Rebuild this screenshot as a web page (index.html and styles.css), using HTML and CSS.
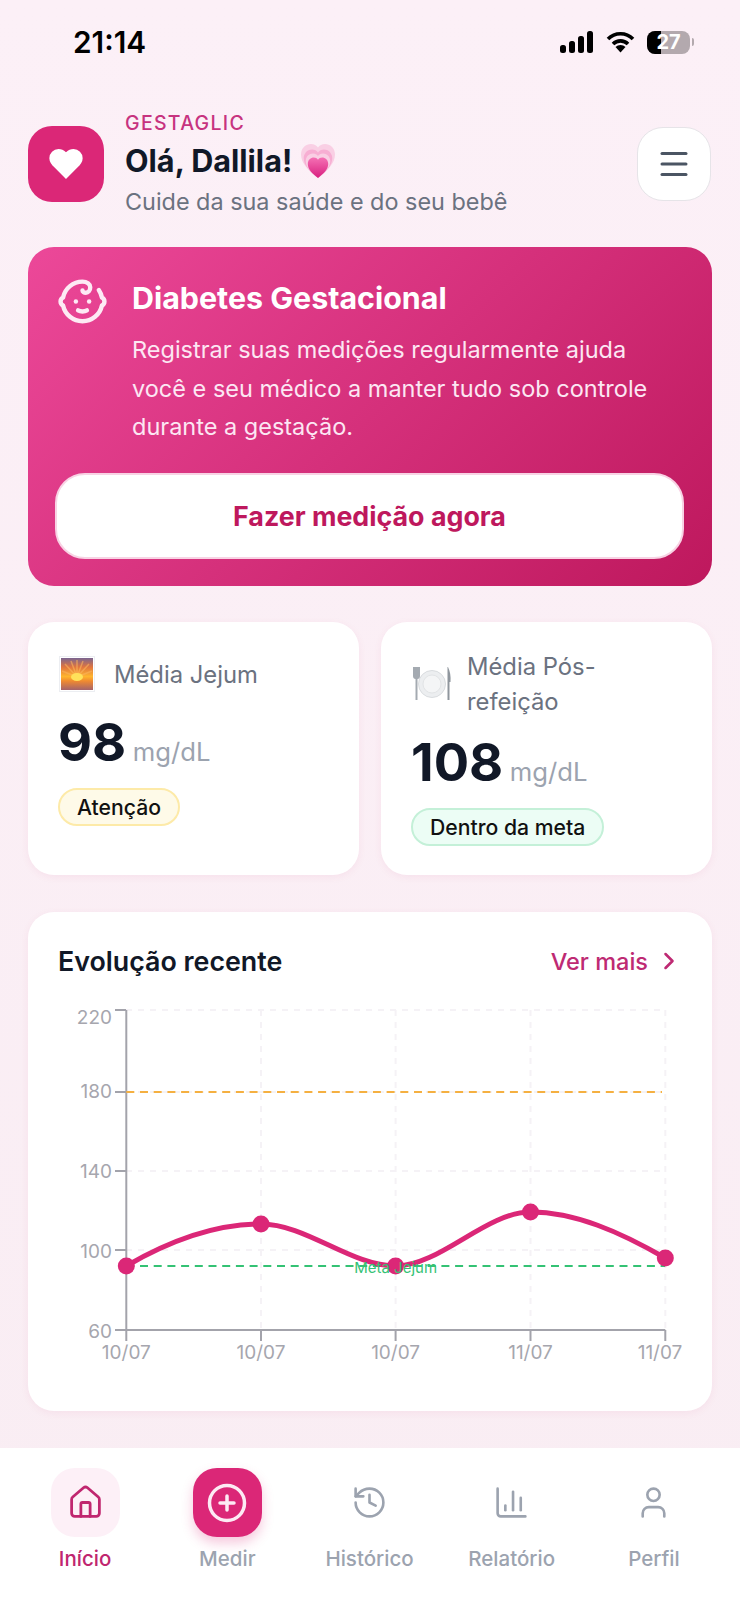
FILE: index.html
```html
<!DOCTYPE html>
<html>
<head>
    <meta charset="utf-8">
    <link rel="stylesheet" href="styles.css">
</head>
<body>
    <div id="screen">
        <div id="status_bar">
            <span id="status_time">21:14</span>
            <div id="status_icons">
                <svg width="34" height="22" viewBox="0 0 34 22"><rect x="0" y="14" width="6" height="8" rx="2.5"/><rect x="9" y="10" width="6" height="12" rx="2.5"/><rect x="18" y="5" width="6" height="17" rx="2.5"/><rect x="27" y="0" width="6" height="22" rx="2.5"/></svg>
                <svg width="29" height="22" viewBox="0 0 29 22" fill="none" stroke="#000" stroke-width="3.6"><path d="M2 8a17.5 17.5 0 0 1 25 0"/><path d="M7 13a10.5 10.5 0 0 1 15 0"/><path d="M14.5 21.5l-5-5.4a6.8 6.8 0 0 1 10 0z" fill="#000" stroke="none"/></svg>
                <div id="battery">
                    <div id="battery_level"></div>
                    <span>27</span>
                </div>
                <div id="battery_tip"></div>
            </div>
        </div>

        <div id="top_header">
            <div id="logo">
                <svg width="40" height="40" viewBox="0 0 24 24" fill="#fff"><path d="M19 14c1.49-1.46 3-3.21 3-5.5A5.5 5.5 0 0 0 16.5 3c-1.76 0-3 .5-4.5 2-1.5-1.5-2.74-2-4.5-2A5.5 5.5 0 0 0 2 8.5c0 2.3 1.5 4.05 3 5.5l7 7Z"/></svg>
            </div>
            <div id="greeting">
                <div id="brand">GESTAGLIC</div>
                <div id="hello">Olá, Dallila!
                    <svg width="36" height="36" viewBox="0 0 36 36">
                        <defs>
                            <path id="heart_shape" d="M18 35C8 27 1 20 1 11.500C1 5 6 1 11 1c3 0 5.500 1.200 7 3.500C19.500 2.200 22 1 25 1c5 0 10 4 10 10.500C35 20 28 27 18 35Z"/>
                            <linearGradient id="heart_core" x1="0" y1="0" x2="0" y2="1"><stop offset="0" stop-color="#f570b4"/><stop offset="1" stop-color="#d81f7f"/></linearGradient>
                        </defs>
                        <use href="#heart_shape" fill="#f9cfe4"/>
                        <use href="#heart_shape" fill="#f7aed3" transform="translate(18 35) scale(.84) translate(-18 -35)"/>
                        <use href="#heart_shape" fill="#f9cfe4" transform="translate(18 35) scale(.72) translate(-18 -35)"/>
                        <use href="#heart_shape" fill="url(#heart_core)" transform="translate(18 35) scale(.6) translate(-18 -35)"/>
                    </svg>
                </div>
                <div id="tagline">Cuide da sua saúde e do seu bebê</div>
            </div>
            <div id="menu_btn">
                <svg width="36" height="36" viewBox="0 0 24 24" fill="none" stroke="#4b5563" stroke-width="2" stroke-linecap="round" stroke-linejoin="round"><path d="M4 5h16"/><path d="M4 12h16"/><path d="M4 19h16"/></svg>
            </div>
        </div>

        <div id="hero">
            <div id="hero_top">
                <svg width="53" height="53" viewBox="0 0 24 24" fill="none" stroke="#fdeaf4" stroke-width="2" stroke-linecap="round" stroke-linejoin="round"><path d="M10 16c.5.3 1.200.5 2 .5s1.500-.2 2-.5"/><path d="M15 12h.01"/><path d="M19.380 6.813A9 9 0 0 1 20.800 10.200a2 2 0 0 1 0 3.600 9 9 0 0 1-17.600 0 2 2 0 0 1 0-3.600A9 9 0 0 1 12 3c2 0 3.500 1.100 3.500 2.500s-.9 2.500-2 2.500c-.8 0-1.500-.4-1.500-1"/><path d="M9 12h.01"/></svg>
                <div id="hero_text">
                    <div id="hero_title">Diabetes Gestacional</div>
                    <div id="hero_desc">Registrar suas medições regularmente ajuda você e seu médico a manter tudo sob controle durante a gestação.</div>
                </div>
            </div>
            <div id="hero_btn">Fazer medição agora</div>
        </div>

        <div id="stats">
            <div class="stat_card">
                <div class="stat_label">
                    <svg class="stat_icon" width="36" height="36" viewBox="0 0 36 36">
                        <defs><linearGradient id="sky" x1="0" y1="0" x2="0" y2="1"><stop offset="0" stop-color="#7a6590"/><stop offset="0.28" stop-color="#e0743f"/><stop offset="0.58" stop-color="#ffb52e"/><stop offset="0.72" stop-color="#f08a30"/><stop offset="1" stop-color="#a5636a"/></linearGradient></defs>
                        <rect x="0.5" y="0.5" width="35" height="35" fill="#fff" stroke="#eceef2"/>
                        <rect x="2" y="2" width="32" height="32" fill="url(#sky)"/>
                        <path d="M18 21L6 8M18 21L12 5M18 21L18 4M18 21L24 5M18 21L30 8M18 21L3 15M18 21L33 15" stroke="#fbb45c" stroke-width="1.500" opacity="0.6"/>
                        <ellipse cx="18" cy="21" rx="6" ry="4" fill="#ffe15a"/>
                    </svg>
                    <span>Média Jejum</span>
                </div>
                <div class="stat_value"><b>98</b> <span>mg/dL</span></div>
                <div class="badge badge_warn">Atenção</div>
            </div>
            <div class="stat_card">
                <div class="stat_label">
                    <svg class="stat_icon" width="40" height="38" viewBox="0 0 40 38">
                        <circle cx="20" cy="19" r="13.500" fill="#eceef0" stroke="#d9dcdf"/>
                        <circle cx="20" cy="19" r="9" fill="#f4f5f6" stroke="#e2e4e6"/>
                        <path d="M1 2v9c0 2 1 3 2.500 3v21h2V14C7 14 8 13 8 11V2" fill="#9aa1a8" opacity="0.9"/>
                        <path d="M36 2c2 4 3 9 2.500 15h-1v18h-2V2z" fill="#8f969d"/>
                    </svg>
                    <span>Média Pós-refeição</span>
                </div>
                <div class="stat_value"><b>108</b> <span>mg/dL</span></div>
                <div class="badge badge_ok">Dentro da meta</div>
            </div>
        </div>

        <div id="chart_card">
            <div id="chart_header">
                <div id="chart_title">Evolução recente</div>
                <div id="see_more">Ver mais
                    <svg width="28" height="28" viewBox="0 0 24 24" fill="none" stroke="#be2a73" stroke-width="2.200" stroke-linecap="round" stroke-linejoin="round"><path d="m9 18 6-6-6-6"/></svg>
                </div>
            </div>
            <svg id="chart" width="684" height="390" viewBox="28 990 684 390">
                <g class="grid">
                    <path d="M126 1010H665M126 1092H665M126 1171H665M126 1250H665"/>
                    <path d="M261 1010V1330M395.600 1010V1330M530.500 1010V1330M665.300 1010V1330"/>
                </g>
                <path class="axis" d="M126.300 1010V1330H665.300M115 1010h11M115 1092h11M115 1171h11M115 1250h11M115 1330h11M126.300 1330v11M261 1330v11M395.600 1330v11M530.500 1330v11M665.300 1330v11"/>
                <path class="limit_high" d="M126.300 1092H662"/>
                <path class="limit_goal" d="M126.300 1266H665"/>
                <path class="curve" d="M126.300 1266C171 1240 216 1224 261 1224C306 1224 351 1266 395.600 1266C440 1266 486 1212 530.500 1212C575 1212 620 1232 665.300 1258"/>
                <g class="points">
                    <circle cx="126.300" cy="1266" r="8.500"/>
                    <circle cx="261" cy="1224" r="8.500"/>
                    <circle cx="395.600" cy="1266" r="8.500"/>
                    <circle cx="530.500" cy="1212" r="8.500"/>
                    <circle cx="665.300" cy="1258" r="8.500"/>
                </g>
                <text class="goal_label" x="395.600" y="1273">Meta Jejum</text>
                <g class="y_labels">
                    <text x="112" y="1024">220</text>
                    <text x="112" y="1098">180</text>
                    <text x="112" y="1178">140</text>
                    <text x="112" y="1258">100</text>
                    <text x="112" y="1338">60</text>
                </g>
                <g class="x_labels">
                    <text x="126.300" y="1359">10/07</text>
                    <text x="261" y="1359">10/07</text>
                    <text x="395.600" y="1359">10/07</text>
                    <text x="530.500" y="1359">11/07</text>
                    <text x="660" y="1359">11/07</text>
                </g>
            </svg>
        </div>

        <div id="nav">
            <div class="nav_item nav_active">
                <div class="nav_icon">
                    <svg width="37" height="37" viewBox="0 0 24 24" fill="none" stroke="#c0266f" stroke-width="1.800" stroke-linecap="round" stroke-linejoin="round"><path d="M15 21v-8a1 1 0 0 0-1-1h-4a1 1 0 0 0-1 1v8"/><path d="M3 10a2 2 0 0 1 .709-1.528l7-5.999a2 2 0 0 1 2.582 0l7 5.999A2 2 0 0 1 21 10v9a2 2 0 0 1-2 2H5a2 2 0 0 1-2-2z"/></svg>
                </div>
                <span>Início</span>
            </div>
            <div class="nav_item">
                <div class="nav_icon nav_add">
                    <svg width="42" height="42" viewBox="0 0 24 24" fill="none" stroke="#fdeaf4" stroke-width="2" stroke-linecap="round" stroke-linejoin="round"><circle cx="12" cy="12" r="10"/><path d="M8 12h8"/><path d="M12 8v8"/></svg>
                </div>
                <span>Medir</span>
            </div>
            <div class="nav_item">
                <div class="nav_icon">
                    <svg width="37" height="37" viewBox="0 0 24 24" fill="none" stroke="#9ca3af" stroke-width="1.700" stroke-linecap="round" stroke-linejoin="round"><path d="M3 12a9 9 0 1 0 9-9 9.750 9.750 0 0 0-6.740 2.740L3 8"/><path d="M3 3v5h5"/><path d="M12 7v5l4 2"/></svg>
                </div>
                <span>Histórico</span>
            </div>
            <div class="nav_item">
                <div class="nav_icon">
                    <svg width="37" height="37" viewBox="0 0 24 24" fill="none" stroke="#9ca3af" stroke-width="1.700" stroke-linecap="round" stroke-linejoin="round"><path d="M3 3v16a2 2 0 0 0 2 2h16"/><path d="M18 17V9"/><path d="M13 17V5"/><path d="M8 17v-3"/></svg>
                </div>
                <span>Relatório</span>
            </div>
            <div class="nav_item">
                <div class="nav_icon">
                    <svg width="37" height="37" viewBox="0 0 24 24" fill="none" stroke="#9ca3af" stroke-width="1.700" stroke-linecap="round" stroke-linejoin="round"><path d="M19 21v-2a4 4 0 0 0-4-4H9a4 4 0 0 0-4 4v2"/><circle cx="12" cy="7" r="4"/></svg>
                </div>
                <span>Perfil</span>
            </div>
        </div>
    </div>
</body>
</html>
```

FILE: styles.css
```css
html, body {
    margin: 0;
    padding: 0;
}
body {
    font-family: "Inter", "Liberation Sans", sans-serif;
    color: #111827;
}
#screen {
    display: flex;
    flex-direction: column;
    width: 740px;
    height: 1600px;
    overflow: hidden;
    background-image: linear-gradient(#fcf0f7, #f9edf3);
}

/* status bar */
#status_bar {
    display: flex;
    justify-content: space-between;
    align-items: center;
    height: 84px;
    padding: 0 46px 0 73px;
    flex-shrink: 0;
}
#status_time {
    font-size: 29.800px;
    font-weight: 600;
    color: #000;
}
#status_icons {
    display: flex;
    align-items: center;
}
#status_icons svg {
    margin-right: 12px;
}
#battery {
    position: relative;
    width: 43px;
    height: 23px;
    border-radius: 8px;
    overflow: hidden;
    background-color: #b3a9ae;
    text-align: center;
    font-size: 20px;
    font-weight: 700;
    line-height: 23px;
    color: #fff;
}
#battery_level {
    position: absolute;
    left: 0;
    top: 0;
    width: 14px;
    height: 23px;
    background-color: #000;
}
#battery span {
    position: relative;
}
#battery_tip {
    width: 2px;
    height: 8px;
    margin-left: 2px;
    border-radius: 0 2px 2px 0;
    background-color: #b3a9ae;
}

/* header */
#top_header {
    display: flex;
    align-items: center;
    height: 134px;
    padding: 26px 29px 0 28px;
    flex-shrink: 0;
    box-sizing: border-box;
}
#logo {
    display: flex;
    align-items: center;
    justify-content: center;
    width: 76px;
    height: 76px;
    margin-right: 21px;
    border-radius: 24px;
    background-color: #db2777;
}
#greeting {
    flex-grow: 1;
}
#brand {
    font-size: 19.500px;
    line-height: 24px;
    font-weight: 500;
    letter-spacing: 1.300px;
    color: #c7337f;
}
#hello {
    display: flex;
    align-items: center;
    gap: 8px;
    margin-top: 7px;
    font-size: 30.600px;
    line-height: 38px;
    font-weight: 700;
}
#tagline {
    margin-top: 7px;
    font-size: 23.400px;
    line-height: 30px;
    color: #6b7280;
}
#menu_btn {
    display: flex;
    align-items: center;
    justify-content: center;
    width: 74px;
    height: 74px;
    border: 1px solid #e6e4e8;
    border-radius: 26px;
    box-sizing: border-box;
    background-color: #fff;
}

/* hero */
#hero {
    margin: 29px 28px 0 28px;
    padding: 27px 28px 28px 27px;
    height: 339px;
    box-sizing: border-box;
    flex-shrink: 0;
    border-radius: 26px;
    background-image: linear-gradient(135deg, #ec4899, #be185d);
    color: #fff;
}
#hero_top {
    display: flex;
    gap: 20px;
}
#hero_top svg {
    flex-shrink: 0;
    margin: 1px 3px 3px 1px;
}
#hero_title {
    margin-top: 4px;
    font-size: 30.400px;
    line-height: 40px;
    font-weight: 700;
}
#hero_desc {
    width: 535px;
    margin-top: 13px;
    font-size: 23.500px;
    line-height: 38.500px;
    color: #fce7f3;
}
#hero_btn {
    display: flex;
    align-items: center;
    justify-content: center;
    height: 86px;
    margin-top: 26px;
    box-sizing: border-box;
    border: 2px solid #f8d3e4;
    border-radius: 30px;
    background-color: #fff;
    font-size: 26.800px;
    font-weight: 700;
    color: #be185d;
}

/* stat cards */
#stats {
    display: grid;
    grid-template-columns: 331px 331px;
    gap: 22px;
    margin: 36px 28px 0 28px;
    height: 253px;
    flex-shrink: 0;
}
.stat_card {
    padding: 27px 30px 0 30px;
    border-radius: 26px;
    background-color: #fff;
    box-shadow: 0 2px 8px rgba(190,24,93,0.06);
}
.stat_label {
    display: flex;
    align-items: center;
    gap: 19px;
    min-height: 50px;
    font-size: 23.800px;
    line-height: 35px;
    color: #6b7280;
}
.stat_icon {
    flex-shrink: 0;
    margin-left: 1px;
}
.stat_card + .stat_card .stat_label {
    gap: 15px;
}
.stat_value {
    margin-top: 12px;
    height: 62px;
    line-height: 62px;
    white-space: nowrap;
}
.stat_value b {
    font-size: 52.500px;
    font-weight: 700;
}
.stat_value span {
    margin-left: 2px;
    font-size: 25.700px;
    color: #9ca3af;
}
.badge {
    display: inline-block;
    margin-top: 15px;
    padding: 0 17px;
    height: 38px;
    line-height: 34px;
    box-sizing: border-box;
    border-radius: 19px;
    font-size: 21.200px;
    font-weight: 500;
    color: #111;
}
.badge_warn {
    background-color: #fefae8;
    border: 2px solid #fdeaa8;
}
.badge_ok {
    background-color: #ecfdf5;
    border: 2px solid #c4f0d8;
}

/* chart */
#chart_card {
    margin: 37px 28px 0 28px;
    height: 499px;
    flex-shrink: 0;
    border-radius: 26px;
    background-color: #fff;
    box-shadow: 0 2px 8px rgba(190,24,93,0.06);
}
#chart_header {
    display: flex;
    justify-content: space-between;
    align-items: center;
    height: 76px;
    margin-bottom: 2px;
    padding: 22px 29px 0 30px;
    box-sizing: border-box;
}
#chart_title {
    font-size: 26.800px;
    font-weight: 600;
}
#see_more {
    display: flex;
    align-items: center;
    gap: 7px;
    font-size: 23.500px;
    font-weight: 500;
    color: #be2a73;
}
#chart {
    display: block;
}
#chart text {
    font-family: "Inter", "Liberation Sans", sans-serif;
}
.grid path {
    fill: none;
    stroke: #f5f2f6;
    stroke-width: 2;
    stroke-dasharray: 6 6;
}
.axis {
    fill: none;
    stroke: #a3a3ab;
    stroke-width: 2;
}
.limit_high, .limit_goal {
    fill: none;
    stroke-width: 2;
    stroke-dasharray: 8 5.700;
}
.limit_high {
    stroke: #f5b041;
}
.limit_goal {
    stroke: #34c274;
}
.curve {
    fill: none;
    stroke: #db2777;
    stroke-width: 5;
}
.points circle {
    fill: #db2777;
}
.goal_label {
    font-size: 15px;
    fill: #34c274;
    text-anchor: middle;
}
.y_labels text {
    font-size: 19px;
    fill: #a6a6ae;
    text-anchor: end;
}
.x_labels text {
    font-size: 19px;
    fill: #a6a6ae;
    text-anchor: middle;
}

/* bottom nav */
#nav {
    display: flex;
    margin-top: auto;
    height: 152px;
    padding: 20px 15px 0 14px;
    box-sizing: border-box;
    flex-shrink: 0;
    background-color: #fff;
}
.nav_item {
    display: flex;
    flex-direction: column;
    align-items: center;
    flex: 1;
    font-size: 20.500px;
    font-weight: 500;
    color: #9ca3af;
}
.nav_icon {
    display: flex;
    align-items: center;
    justify-content: center;
    width: 69px;
    height: 69px;
    margin-bottom: 9px;
    border-radius: 24px;
}
.nav_item > span {
    line-height: 26px;
}
.nav_active {
    color: #c0266f;
}
.nav_active .nav_icon {
    background-color: #fdf0f7;
}
.nav_add {
    background-color: #db2777;
    box-shadow: 0 6px 12px rgba(219,39,119,0.25);
}
```
